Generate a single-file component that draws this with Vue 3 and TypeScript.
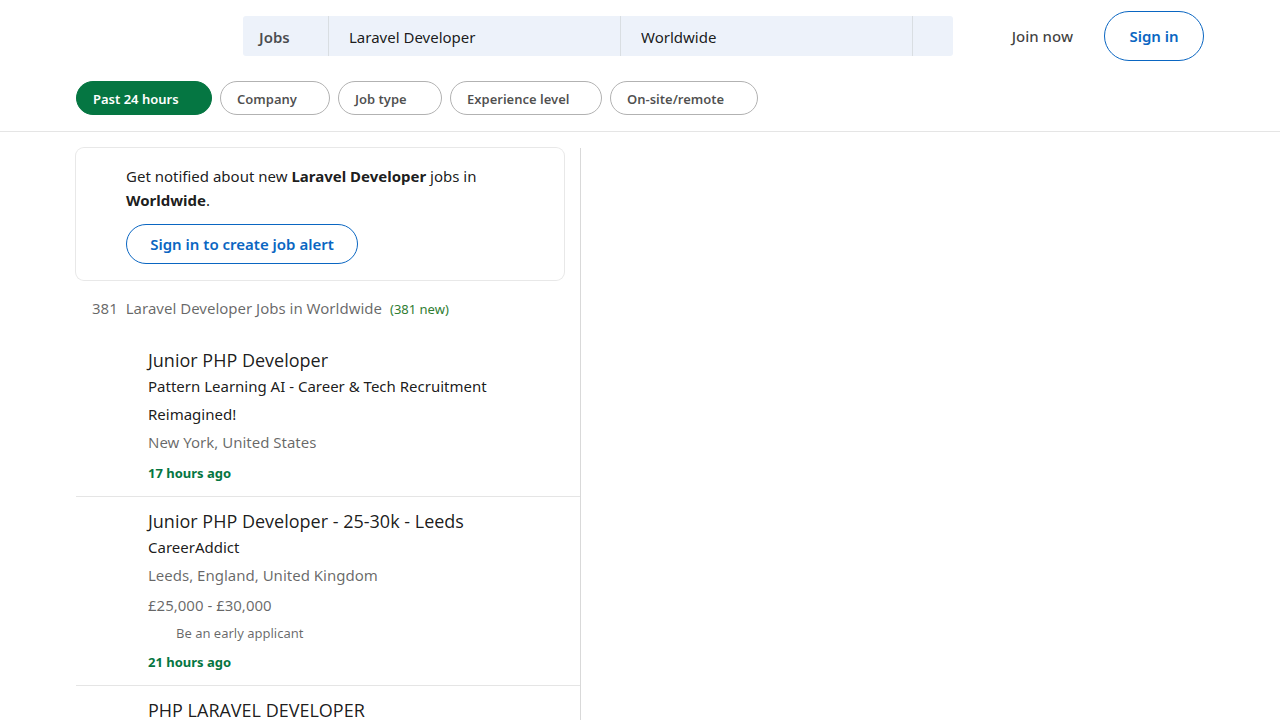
<script setup lang="ts">
import { ref } from 'vue'

interface Job {
  title: string
  company: string
  location: string
  salary?: string
  benefit?: string
  posted: string
}

const keywords = ref('Laravel Developer')
const place = ref('Worldwide')

const filters = ref([
  { label: 'Past 24 hours', size: 'w136', active: true },
  { label: 'Company', size: 'w110', active: false },
  { label: 'Job type', size: 'w104', active: false },
  { label: 'Experience level', size: 'w152', active: false },
  { label: 'On-site/remote', size: 'w148', active: false },
])

const jobs: Job[] = [
  {
    title: 'Junior PHP Developer',
    company: 'Pattern Learning AI - Career & Tech Recruitment Reimagined!',
    location: 'New York, United States',
    posted: '17 hours ago',
  },
  {
    title: 'Junior PHP Developer - 25-30k - Leeds',
    company: 'CareerAddict',
    location: 'Leeds, England, United Kingdom',
    salary: '£25,000 - £30,000',
    benefit: 'Be an early applicant',
    posted: '21 hours ago',
  },
  {
    title: 'PHP LARAVEL DEVELOPER',
    company: '',
    location: '',
    posted: '',
  },
]
</script>

<template>
  <div class="page">
    <header class="header">
      <div class="wrap topbar">
        <form class="search" role="search" @submit.prevent>
          <button type="button" class="switcher">Jobs</button>
          <input v-model="keywords" class="field" type="text" aria-label="Search job titles or companies" />
          <input v-model="place" class="field" type="text" aria-label="Location" />
          <button type="submit" class="submit" aria-label="Search"></button>
        </form>
        <nav class="account">
          <a href="#" class="join">Join now</a>
          <a href="#" class="signin">Sign in</a>
        </nav>
      </div>
      <div class="wrap filters">
        <button
          v-for="f in filters"
          :key="f.label"
          type="button"
          class="pill"
          :class="[f.size, { active: f.active }]"
          :aria-pressed="f.active"
          @click="f.active = !f.active"
        >{{ f.label }}</button>
      </div>
    </header>

    <main class="wrap main">
      <section class="results">
        <div class="alert">
          <p class="alert-text">
            Get notified about new <strong>Laravel Developer</strong> jobs in <strong>Worldwide</strong>.
          </p>
          <button type="button" class="alert-button">Sign in to create job alert</button>
        </div>

        <h1 class="summary">
          <span>381</span>
          <span>Laravel Developer Jobs in Worldwide</span>
          <span class="fresh">(381 new)</span>
        </h1>

        <ul class="jobs">
          <li v-for="job in jobs" :key="job.title" class="job">
            <h2 class="title">{{ job.title }}</h2>
            <p v-if="job.company" class="company">{{ job.company }}</p>
            <p v-if="job.location" class="muted">{{ job.location }}</p>
            <p v-if="job.salary" class="muted salary">{{ job.salary }}</p>
            <p v-if="job.benefit" class="benefit">{{ job.benefit }}</p>
            <time v-if="job.posted" class="posted">{{ job.posted }}</time>
          </li>
        </ul>
      </section>
    </main>
  </div>
</template>

<style>
body {
  margin: 0;
  overflow: hidden;
  background: #fff;
}
</style>

<style scoped>
.page {
  box-sizing: border-box;
  height: 100vh;
  overflow: hidden;
  display: flex;
  flex-direction: column;
  font-family: 'Noto Sans', 'Open Sans', sans-serif;
  font-size: 15px;
  font-weight: 400;
  color: rgba(0, 0, 0, 0.9);
}
.page * {
  box-sizing: border-box;
}
button,
input {
  font: inherit;
  color: inherit;
  margin: 0;
  cursor: pointer;
}
h1,
h2,
p,
ul {
  margin: 0;
  padding: 0;
  font-weight: inherit;
}
.wrap {
  width: 100%;
  max-width: 1128px;
  margin: 0 auto;
}
.header {
  flex: none;
  border-bottom: 1px solid #e5e5e5;
}
.topbar {
  display: flex;
  align-items: center;
  justify-content: space-between;
  height: 72px;
}
.search {
  display: flex;
  flex: 0 1 710px;
  height: 40px;
  margin-left: 167px;
  background: #edf2fa;
  border-radius: 3px;
  overflow: hidden;
}
.switcher {
  width: 85px;
  padding: 2px 16px 0;
  border: 0;
  background: none;
  text-align: left;
  font-weight: 600;
  color: rgba(0, 0, 0, 0.7);
}
.field {
  flex: 1 1 0;
  min-width: 0;
  padding: 2px 20px 0;
  border: 0;
  border-left: 1px solid #d9dee2;
  background: none;
  cursor: text;
}
.submit {
  width: 41px;
  border: 0;
  border-left: 1px solid #d9dee2;
  background: none;
}
.account {
  display: flex;
  align-items: center;
  gap: 31px;
  font-weight: 600;
  white-space: nowrap;
}
.account a {
  text-decoration: none;
}
.join {
  font-weight: 500;
  color: rgba(0, 0, 0, 0.75);
}
.signin {
  width: 100px;
  height: 50px;
  border: 1px solid #0a66c2;
  border-radius: 25px;
  line-height: 48px;
  text-align: center;
  color: #0a66c2;
}
.filters {
  display: flex;
  gap: 8px;
  padding: 9px 0 16px;
}
.pill {
  height: 34px;
  padding: 2px 16px 0;
  border: 1px solid #b2b2b2;
  border-radius: 17px;
  background: #fff;
  font-size: 13px;
  font-weight: 600;
  text-align: left;
  white-space: nowrap;
  color: rgba(0, 0, 0, 0.7);
}
.pill.active {
  border-color: #057642;
  background: #057642;
  color: #fff;
}
.w136 { width: 136px; }
.w110 { width: 110px; }
.w104 { width: 104px; }
.w152 { width: 152px; }
.w148 { width: 148px; }
.main {
  flex: 1;
  min-height: 0;
  padding-top: 16px;
}
.results {
  width: 505px;
  height: 100%;
  border-right: 1px solid #d9d9d9;
}
.alert {
  width: 488px;
  padding: 16px 50px;
  border-radius: 8px;
  box-shadow: 0 0 0 1px #e8e8e8;
}
.alert-text {
  line-height: 24px;
}
.alert-text strong {
  font-weight: 700;
}
.alert-button {
  display: block;
  width: 232px;
  height: 40px;
  margin-top: 12px;
  padding: 0;
  border: 1px solid #0a66c2;
  border-radius: 20px;
  background: #fff;
  font-weight: 600;
  color: #0a66c2;
}
.summary {
  display: flex;
  align-items: baseline;
  gap: 8px;
  padding: 16px 16px 27px;
  font-size: 15px;
  line-height: 24px;
  color: rgba(0, 0, 0, 0.6);
}
.fresh {
  font-size: 13px;
  color: #2f7d32;
}
.jobs {
  list-style: none;
}
.job {
  padding: 0 24px 13px 72px;
  border-bottom: 1px solid #e5e5e5;
}
.job:last-child {
  border-bottom: 0;
}
.job + .job {
  padding-top: 12px;
}
.title {
  font-family: 'Open Sans', 'Noto Sans', sans-serif;
  font-size: 18px;
  line-height: 24px;
  font-weight: 500;
}
.company,
.muted {
  line-height: 28px;
}
.muted {
  color: rgba(0, 0, 0, 0.6);
}
.salary {
  margin-top: 2px;
}
.benefit {
  margin-top: 2px;
  padding-left: 28px;
  font-size: 13px;
  line-height: 24px;
  color: rgba(0, 0, 0, 0.6);
}
.posted {
  display: block;
  margin-top: 7px;
  font-size: 13px;
  line-height: 20px;
  font-weight: 700;
  color: #057642;
}
</style>
